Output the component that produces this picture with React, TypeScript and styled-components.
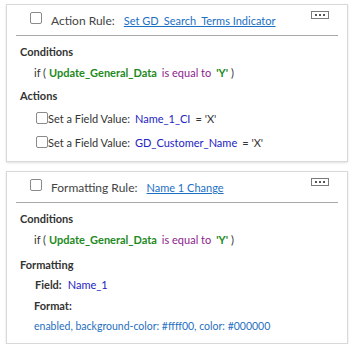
import React from 'react';
import styled, { createGlobalStyle } from 'styled-components';

const GlobalStyle = createGlobalStyle`
    body {
        margin: 0;
        background: #ffffff;
        font-family: Lato, 'Liberation Sans', sans-serif;
        color: #333333;
    }
`;

const Page = styled.div`
    display: flex;
    flex-direction: column;
    gap: 9px;
    padding: 4px 0 0 6px;
    width: 342px;
`;

const Card = styled.div<{ bottom: number }>`
    border: 1px solid #d9d9d9;
    box-shadow: 0 1px 2px rgba(0, 0, 0, 0.12);
    background: #fff;
    padding: 0 9px ${(p) => p.bottom}px 9px;
`;

const Header = styled.div`
    display: flex;
    align-items: center;
    height: 30px;
    padding-left: 14px;
    border-bottom: 1px solid #a8a8a8;
    font-size: 12px;
    position: relative;
`;

const Box = styled.span<{ size: number }>`
    display: inline-block;
    box-sizing: border-box;
    width: ${(p) => p.size}px;
    height: ${(p) => p.size}px;
    border: 1px solid #8a8a8a;
    border-radius: 2px;
    background: #fff;
    flex: none;
`;

const HeaderBox = styled(Box)`
    margin-top: -5px;
    margin-right: 9px;
`;

const RuleType = styled.span`
    color: #444;
    margin-right: 9px;
`;

const RuleLink = styled.a`
    color: #1b70c4;
    font-size: 11px;
    text-decoration: underline;
    cursor: pointer;
`;

const MenuButton = styled.span`
    position: absolute;
    right: 9px;
    top: 6px;
    box-sizing: border-box;
    width: 18px;
    height: 8px;
    border: 1px solid #7a7a7a;
    display: flex;
    align-items: center;
    justify-content: center;
    gap: 2px;
`;

const Dot = styled.span`
    width: 2px;
    height: 2px;
    background: #555;
`;

const Line = styled.div<{ top: number; indent?: number }>`
    display: flex;
    align-items: center;
    height: 20px;
    margin-top: ${(p) => p.top}px;
    padding-left: ${(p) => 4 + (p.indent || 0)}px;
    font-size: 11px;
    white-space: nowrap;
`;

const Title = styled(Line)`
    font-weight: bold;
    color: #333;
`;

const FieldName = styled.b`
    color: #1e8a1e;
    margin: 0 5px 0 3px;
`;

const Operator = styled.span`
    color: #8c1c8c;
    margin-right: 5px;
`;

const Literal = styled.b`
    color: #1e8a1e;
    margin-right: 3px;
`;

const Target = styled.span<{ gap?: number }>`
    color: #2323c2;
    margin: 0 ${(p) => p.gap ?? 5}px;
`;

const Label = styled.b`
    color: #333;
    margin-right: 6px;
`;

const FormatValue = styled.span`
    color: #1f6fbf;
    font-size: 10.5px;
`;

const Condition = ({ top }: { top: number }) => (
    <Line top={top} indent={14}>
        if (<FieldName>Update_General_Data</FieldName>
        <Operator>is equal to</Operator>
        <Literal>'Y'</Literal>)
    </Line>
);

const Menu = () => (
    <MenuButton>
        <Dot />
        <Dot />
        <Dot />
    </MenuButton>
);

const actions = ['Name_1_CI', 'GD_Customer_Name'];

export default function App() {
    return (
        <Page>
            <GlobalStyle />
            <Card bottom={9}>
                <Header>
                    <HeaderBox size={12} />
                    <RuleType>Action Rule:</RuleType>
                    <RuleLink>Set GD_Search_Terms Indicator</RuleLink>
                    <Menu />
                </Header>
                <Title top={5}>Conditions</Title>
                <Condition top={1} />
                <Title top={3}>Actions</Title>
                {actions.map((a, i) => (
                    <Line key={a} top={i === 0 ? 3 : 4} indent={16}>
                        <Box size={12} />
                        Set a Field Value:
                        <Target>{a}</Target>= 'X'
                    </Line>
                ))}
            </Card>
            <Card bottom={7}>
                <Header>
                    <HeaderBox size={12} />
                    <RuleType>Formatting Rule:</RuleType>
                    <RuleLink>Name 1 Change</RuleLink>
                    <Menu />
                </Header>
                <Title top={5}>Conditions</Title>
                <Condition top={1} />
                <Title top={5}>Formatting</Title>
                <Line top={0} indent={15}>
                    <Label>Field:</Label>
                    <Target gap={0}>Name_1</Target>
                </Line>
                <Line top={1} indent={14}>
                    <Label>Format:</Label>
                </Line>
                <Line top={1} indent={14}>
                    <FormatValue>enabled, background-color: #ffff00, color: #000000</FormatValue>
                </Line>
            </Card>
        </Page>
    );
}
